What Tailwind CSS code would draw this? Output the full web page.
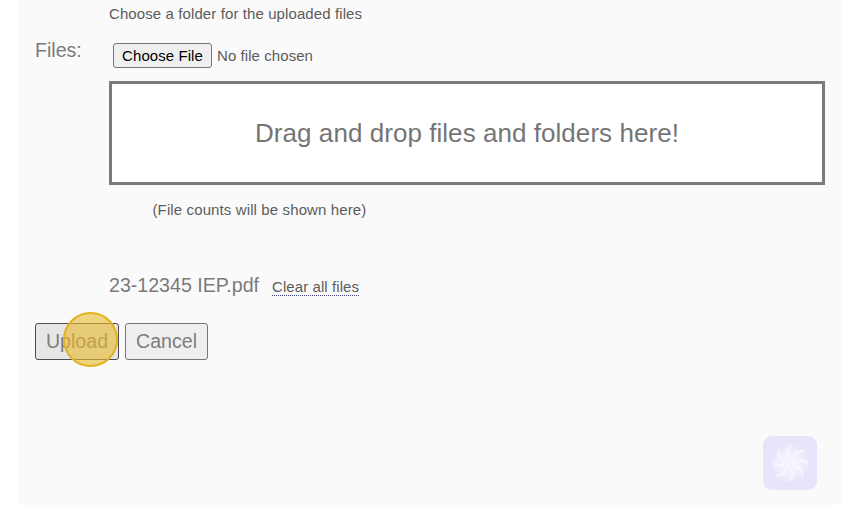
<!DOCTYPE html>
<html lang="en">
<head>
<meta charset="utf-8">
<title>Upload files</title>
<script src="https://cdn.jsdelivr.net/npm/@tailwindcss/browser@4"></script>
</head>
<body class="h-[523px] overflow-hidden bg-white font-['Liberation_Sans',Arial,sans-serif] text-[15px] leading-5 text-[#5c5c5c]">
<main class="mx-[18px] flex h-[505px] w-[824px] flex-col rounded-b-md bg-[#fafafa] px-[17px]">
  <p class="ml-[74px] mt-[4px] h-5 whitespace-nowrap tracking-[0.1px]"><span>Choose a folder for the uploaded files</span></p>
  <div class="mt-[15px] flex">
    <div class="w-[74px] shrink-0 text-[19.6px] leading-[22px] text-[#7a7a7a]"><span>Files:</span></div>
    <div class="w-[716px]">
      <div class="ml-1 mt-1 flex h-[25px] items-center gap-[5px] whitespace-nowrap tracking-[0.07px]">
        <button class="h-[25px] w-[99px] rounded-[3px] border border-[#767676] bg-[#efefef] text-black"><span>Choose File</span></button>
        <span>No file chosen</span>
      </div>
      <div class="mt-[13px] flex h-[104px] items-center justify-center border-[3px] border-[#7b7b7b] bg-white text-[26px] tracking-[0.05px] text-[#757575]"><span>Drag and drop files and folders here!</span></div>
      <p class="ml-[43.5px] mt-[15px] tracking-[0.12px]"><span>(File counts will be shown here)</span></p>
      <div class="mt-[53px] flex h-[24px] items-baseline gap-[13px] whitespace-nowrap">
        <span class="text-[19.6px] leading-6 text-[#7a7a7a]">23-12345 IEP.pdf</span>
        <a class="border-b border-dotted border-[#3f3f7a] leading-[17px] tracking-[0.08px] text-[#5c5c5c]">Clear all files</a>
      </div>
    </div>
  </div>
  <div class="mt-[26px] flex gap-[6px] text-[19.6px] text-[#7d7d7d]">
    <div class="relative">
      <button class="h-[37px] w-[84px] rounded-[3px] border border-[#4c4c55] bg-[#e6e6e6] pb-[2px]"><span>Upload</span></button>
      <div class="absolute left-[28px] top-[-11px] size-[55px] rounded-full border-2 border-[#e2b222] bg-[#e9b92b]/60"></div>
    </div>
    <button class="h-[37px] w-[83px] rounded-[3px] border border-[#767676] bg-[#efefef] pb-[2px]"><span>Cancel</span></button>
  </div>
  <div class="mt-auto mb-[15px] mr-[8px] flex size-[54px] items-center justify-center self-end rounded-[9px] bg-[#e8e4fb]">
    <svg class="size-[54px]" viewBox="0 0 54 54" fill="none">
      <defs><radialGradient id="glow"><stop offset="0" stop-color="#f6f4fe"/><stop offset=".6" stop-color="#f0eefd"/><stop offset="1" stop-color="#e8e4fb" stop-opacity="0"/></radialGradient></defs>
      <circle cx="27" cy="27" r="22" fill="url(#glow)"/>
      <g class="blur-[0.4px]" stroke="#fbfaff" stroke-opacity=".65" stroke-width="2.2" stroke-linecap="round">
        <path id="blade" d="M15 14Q14 22 24 24"/>
        <use href="#blade" transform="rotate(45 27 27)"/><use href="#blade" transform="rotate(90 27 27)"/><use href="#blade" transform="rotate(135 27 27)"/><use href="#blade" transform="rotate(180 27 27)"/><use href="#blade" transform="rotate(225 27 27)"/><use href="#blade" transform="rotate(270 27 27)"/><use href="#blade" transform="rotate(315 27 27)"/>
      </g>
    </svg>
  </div>
</main>
</body>
</html>
